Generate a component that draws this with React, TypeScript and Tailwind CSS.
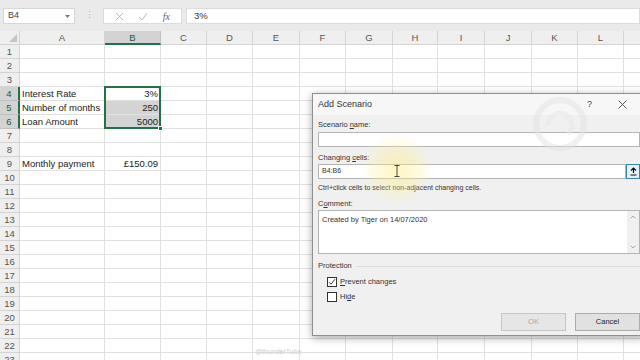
import React from 'react';

const COLS = ['A', 'B', 'C', 'D', 'E', 'F', 'G', 'H', 'I', 'J', 'K', 'L', 'M'];
const ROWS = Array.from({ length: 23 }, (_, i) => i + 1);

const DATA: Record<string, string> = {
  A4: 'Interest Rate',
  B4: '3%',
  A5: 'Number of months',
  B5: '250',
  A6: 'Loan Amount',
  B6: '5000',
  A9: 'Monthly payment',
  B9: '£150.09',
};

const Underlined: React.FC<{ before: string; key_: string; after: string }> = ({ before, key_, after }) => (
  <span>
    {before}
    <span className="underline underline-offset-1">{key_}</span>
    {after}
  </span>
);

const FormulaBar = () => (
  <div className="h-[31px] bg-[#eaeaea] flex items-start pt-[8px] pl-[3px] gap-[4px]">
    <div className="w-[72px] h-[16px] bg-white border border-[#d6d6d6] flex items-center justify-between px-[4px]">
      <span className="text-[9px] text-[#444]">B4</span>
      <svg width="5" height="3" viewBox="0 0 5 3"><path d="M0 0h5L2.5 3z" fill="#777" /></svg>
    </div>
    <div className="w-[20px] h-[16px] flex items-center justify-center text-[#aaa] text-[9px]">⋮</div>
    <div className="w-[79px] h-[16px] bg-white border border-[#dcdcdc] flex items-center justify-around px-[4px]">
      <svg width="9" height="9" viewBox="0 0 9 9"><path d="M1 1l7 7M8 1L1 8" stroke="#bbb" strokeWidth="1" /></svg>
      <svg width="10" height="9" viewBox="0 0 10 9"><path d="M1 5l3 3 5-7" stroke="#bbb" strokeWidth="1" fill="none" /></svg>
      <span className="text-[10px] italic font-['Liberation_Serif',serif] text-[#666]">fx</span>
    </div>
    <div className="flex-1 h-[16px] bg-white border border-[#dcdcdc] flex items-center pl-[7px]">
      <span className="text-[9.5px] text-[#333]">3%</span>
    </div>
  </div>
);

const Sheet = () => (
  <div className="w-[670px] grid grid-cols-[20px_85px_56px_46px_46px_47px_46px_47px_45px_47px_47px_46px_46px_46px] auto-rows-[14px]">
    <div className="bg-[#efefef] border-r border-b border-[#d4d4d4] relative">
      <svg className="absolute right-[2px] bottom-[2px]" width="8" height="8" viewBox="0 0 8 8"><path d="M8 0v8H0z" fill="#c4c4c4" /></svg>
    </div>
    {COLS.map((c) => (
      <div
        key={c}
        className={
          c === 'B'
            ? 'bg-[#d3d3d3] border-r border-[#c0c0c0] border-b-2 border-b-[#217346] text-[#1e5a3a] text-[9.5px] leading-[13px] text-center'
            : 'bg-[#efefef] border-r border-b border-[#d4d4d4] text-[#555] text-[9.5px] leading-[13px] text-center'
        }
      >
        {c === 'M' ? '' : c}
      </div>
    ))}
    {ROWS.map((r) => {
      const sel = r >= 4 && r <= 6;
      return (
        <React.Fragment key={r}>
          <div
            className={
              sel
                ? 'bg-[#d3d3d3] border-b border-[#c0c0c0] border-r-2 border-r-[#217346] text-[#1e5a3a] text-[9.5px] leading-[13px] text-center'
                : 'bg-[#efefef] border-r border-b border-[#d4d4d4] text-[#555] text-[9.5px] leading-[13px] text-center'
            }
          >
            {r}
          </div>
          {COLS.map((c) => {
            const id = c + r;
            const shaded = c === 'B' && (r === 5 || r === 6);
            return (
              <div
                key={id}
                className={`border-r border-b border-[#e1e1e1] text-[9.5px] leading-[13px] text-[#222] px-[2px] whitespace-nowrap overflow-visible ${
                  shaded ? 'bg-[#d4d4d4]' : 'bg-white'
                } ${c === 'B' ? 'text-right' : 'text-left'}`}
              >
                {DATA[id] ?? ''}
              </div>
            );
          })}
        </React.Fragment>
      );
    })}
  </div>
);

const Checkbox: React.FC<{ checked?: boolean }> = ({ checked }) => (
  <div className="w-[10px] h-[10px] border border-[#333] bg-white flex items-center justify-center">
    {checked && (
      <svg width="8" height="8" viewBox="0 0 8 8"><path d="M1 4.2l2 2 4-5" stroke="#222" strokeWidth="0.9" fill="none" /></svg>
    )}
  </div>
);

const Dialog = () => (
  <div className="absolute left-[312px] top-[93px] w-[334px] h-[243px] bg-[#f0f0f0] border border-[#8f8f8f] shadow-[0_2px_8px_rgba(0,0,0,0.35)] flex flex-col font-['Liberation_Sans',sans-serif] text-[#333]">
    <div className="h-[21px] bg-[#f7f7f7] flex items-center pl-[5px] pr-[18px]">
      <span className="text-[9px] text-[#333] flex-1">Add Scenario</span>
      <span className="text-[9px] text-[#444] mr-[26px]">?</span>
      <svg width="9" height="9" viewBox="0 0 9 9"><path d="M0.5 0.5l8 8M8.5 0.5l-8 8" stroke="#444" strokeWidth="0.9" /></svg>
    </div>
    <div className="flex flex-col px-[5px]">
      <div className="text-[7.5px] leading-[10px] mt-[5px]"><Underlined before="Scenario " key_="n" after="ame:" /></div>
      <div className="h-[15px] bg-white border border-[#b4b4b4] mt-[2px]" />
      <div className="text-[7.5px] leading-[10px] mt-[6px]"><Underlined before="Changing " key_="c" after="ells:" /></div>
      <div className="flex mt-[1px] h-[15px]">
        <div className="flex-1 bg-white border border-[#b4b4b4] flex items-center pl-[3px] text-[7px]">B4:B6</div>
        <div className="w-[14px] bg-[#e5f1fb] border border-[#3c7fb1] flex items-center justify-center">
          <svg width="7" height="9" viewBox="0 0 7 9"><path d="M3.5 1v5M1 3.5l2.5-2.5 2.5 2.5M0.5 8h6" stroke="#111" strokeWidth="1.2" fill="none" /></svg>
        </div>
      </div>
      <div className="text-[7px] leading-[10px] mt-[4px] text-[#333]">Ctrl+click cells to select non-adjacent changing cells.</div>
      <div className="text-[7.5px] leading-[10px] mt-[6px]"><Underlined before="C" key_="o" after="mment:" /></div>
      <div className="flex h-[44px] mt-[1px] bg-white border border-[#b4b4b4]">
        <div className="flex-1 text-[7.5px] pl-[3px] pt-[3px] text-[#333]">Created by Tiger on 14/07/2020</div>
        <div className="w-[12px] bg-[#f0f0f0] flex flex-col items-center justify-between py-[4px]">
          <svg width="6" height="4" viewBox="0 0 6 4"><path d="M0.5 3.5L3 1l2.5 2.5" stroke="#aaa" fill="none" /></svg>
          <svg width="6" height="4" viewBox="0 0 6 4"><path d="M0.5 0.5L3 3l2.5-2.5" stroke="#aaa" fill="none" /></svg>
        </div>
      </div>
      <div className="flex items-center gap-[4px] mt-[7px]">
        <span className="text-[7.5px] leading-[10px]">Protection</span>
        <div className="flex-1 border-t border-[#dadada]" />
      </div>
      <div className="flex items-center gap-[3px] mt-[6px] ml-[9px]">
        <Checkbox checked />
        <span className="text-[7.5px] leading-[10px]"><Underlined before="" key_="P" after="revent changes" /></span>
      </div>
      <div className="flex items-center gap-[3px] mt-[5px] ml-[9px]">
        <Checkbox />
        <span className="text-[7.5px] leading-[10px]"><Underlined before="Hi" key_="d" after="e" /></span>
      </div>
      <div className="flex justify-end gap-[9px] mt-[11px]">
        <div className="w-[65px] h-[18px] bg-[#e6e6e6] border border-[#c6c6c6] flex items-center justify-center text-[7.5px] text-[#a6a6a6]">OK</div>
        <div className="w-[65px] h-[18px] bg-[#e1e1e1] border border-[#adadad] flex items-center justify-center text-[7.5px] text-[#222]">Cancel</div>
      </div>
    </div>
  </div>
);

export default function App() {
  return (
    <div className="w-[640px] h-[360px] relative overflow-hidden bg-white font-['Liberation_Sans',sans-serif]">
      <FormulaBar />
      <Sheet />
      {/* selection outline B4:B6 */}
      <div className="absolute left-[104px] top-[86px] w-[57px] h-[43px] border-2 border-[#217346] pointer-events-none">
        <div className="absolute right-[-4px] bottom-[-4px] w-[5px] h-[5px] bg-[#217346] border border-white" />
      </div>
      <Dialog />
      {/* cursor highlight */}
      <div className="absolute left-[362px] top-[134px] w-[70px] h-[70px] rounded-full bg-[radial-gradient(circle,rgba(255,236,120,0.45)_0%,rgba(255,240,150,0.3)_45%,rgba(255,245,180,0)_72%)] pointer-events-none" />
      <svg className="absolute left-[394px] top-[165px]" width="6" height="12" viewBox="0 0 6 12">
        <path d="M0.5 0.5h5M3 0.5v11M0.5 11.5h5" stroke="#333" strokeWidth="0.9" fill="none" />
      </svg>
      {/* channel watermark */}
      <svg className="absolute left-[530px] top-[94px] opacity-50" width="60" height="60" viewBox="0 0 60 60">
        <circle cx="30" cy="30" r="24" stroke="#e4e4e4" strokeWidth="6" fill="none" />
        <path d="M18 32a12 12 0 1 1 20 8" stroke="#e8e8e8" strokeWidth="5" fill="none" />
      </svg>
      <div className="absolute left-[255px] top-[347px] text-[7px] text-[#cfcfcf]">@thunderTube</div>
    </div>
  );
}
